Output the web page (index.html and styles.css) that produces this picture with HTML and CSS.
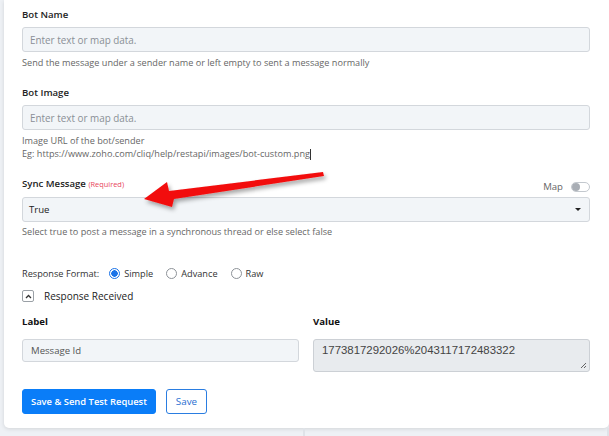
FILE: index.html
```html
<!DOCTYPE html>
<html lang="en">
<head>
    <meta charset="UTF-8">
    <meta name="viewport" content="width=device-width, initial-scale=1.0">
    <title>Post message as bot</title>
    <link rel="stylesheet" href="styles.css">
</head>
<body>
    <div class="card">
        <div class="field">
            <label class="field-label">Bot Name</label>
            <input class="text-input" type="text" placeholder="Enter text or map data.">
            <p class="hint">Send the message under a sender name or left empty to sent a message normally</p>
        </div>

        <div class="field">
            <label class="field-label">Bot Image</label>
            <input class="text-input" type="text" placeholder="Enter text or map data.">
            <p class="hint">Image URL of the bot/sender<br>Eg: https://www.zoho.com/cliq/help/restapi/images/bot-custom.png<span class="cursor"></span></p>
        </div>

        <div class="field">
            <div class="label-row">
                <label class="field-label">Sync Message <span class="required">(Required)</span></label>
                <div class="map-toggle">
                    <span>Map</span>
                    <span class="switch"><span class="knob"></span></span>
                </div>
            </div>
            <div class="select-box">
                <span>True</span>
                <span class="caret"></span>
            </div>
            <p class="hint">Select true to post a message in a synchronous thread or else select false</p>
        </div>

        <div class="format-row">
            <span class="format-label">Response Format:</span>
            <label class="radio"><span class="radio-dot checked"></span>Simple</label>
            <label class="radio"><span class="radio-dot"></span>Advance</label>
            <label class="radio"><span class="radio-dot"></span>Raw</label>
        </div>

        <div class="collapse-row">
            <span class="collapse-btn">
                <svg width="7" height="5" viewBox="0 0 7 5"><path d="M1 4 L3.5 1.5 L6 4" fill="none" stroke="#333" stroke-width="1.3"/></svg>
            </span>
            <span>Response Received</span>
        </div>

        <div class="response-grid">
            <div class="col">
                <div class="col-title">Label</div>
                <div class="label-box">Message Id</div>
            </div>
            <div class="col">
                <div class="col-title">Value</div>
                <div class="value-box">1773817292026%2043117172483322
                    <svg class="grip" width="7" height="7" viewBox="0 0 7 7"><path d="M6 1 L1 6 M6 4 L4 6" stroke="#555" stroke-width="0.9"/></svg>
                </div>
            </div>
        </div>

        <div class="actions">
            <button class="btn btn-primary">Save &amp; Send Test Request</button>
            <button class="btn btn-outline">Save</button>
        </div>
    </div>

    <div class="below">
        <div class="below-col"></div>
        <div class="below-col"></div>
    </div>

    <svg class="annotation" width="609" height="436" viewBox="0 0 609 436">
        <defs>
            <filter id="shadow" x="-10%" y="-50%" width="120%" height="200%">
                <feDropShadow dx="2" dy="3" stdDeviation="2" flood-color="#000" flood-opacity="0.35"/>
            </filter>
        </defs>
        <polygon points="144,199 167,182 169,191 323,172 324,176 174,199 172,207" fill="#f20d0d" filter="url(#shadow)"/>
    </svg>
</body>
</html>
```

FILE: styles.css
```css
* {
    box-sizing: border-box;
    margin: 0;
    padding: 0;
}
body {
    font-family: 'Open Sans', 'Noto Sans', sans-serif;
    background-color: #eef1f5;
    color: #333;
    width: 609px;
    height: 436px;
    overflow: hidden;
    position: relative;
}
.card {
    margin-left: 4px;
    background: #fff;
    border-radius: 0 0 5px 5px;
    box-shadow: 0 1px 4px rgba(0,0,0,0.12);
    padding: 8px 19px 13px 18px;
    height: 428px;
}
.field {
    margin-bottom: 17px;
}
.field-label {
    display: block;
    font-size: 9.6px;
    font-weight: 600;
    color: #222;
    line-height: 14px;
    margin-bottom: 5px;
}
.required {
    color: #e8455b;
    font-size: 7.4px;
    font-weight: 400;
}
.text-input {
    display: block;
    width: 100%;
    height: 25px;
    border: 1px solid #d3d7dc;
    border-radius: 3px;
    background: #f2f5f8;
    padding: 0 7px;
    font-family: inherit;
    font-size: 9.9px;
    color: #333;
    outline: none;
}
.text-input::placeholder {
    color: #8a8f96;
}
.hint {
    margin-top: 4px;
    font-size: 9.15px;
    line-height: 13px;
    color: #666;
}
.cursor {
    display: inline-block;
    width: 1px;
    height: 11px;
    background: #333;
    vertical-align: middle;
}
.label-row {
    display: flex;
    justify-content: space-between;
    align-items: flex-end;
    margin-bottom: 6px;
}
.label-row .field-label {
    margin-bottom: 0;
}
.map-toggle {
    display: flex;
    align-items: center;
    gap: 8px;
    font-size: 9.6px;
    color: #666;
    margin-bottom: -2px;
}
.switch {
    width: 19px;
    height: 10px;
    border: 1px solid #c3c8ce;
    border-radius: 6px;
    position: relative;
    background: #fff;
}
.knob {
    position: absolute;
    left: 0;
    top: 0;
    width: 8px;
    height: 8px;
    border-radius: 50%;
    background: #a9aeb5;
}
.select-box {
    display: flex;
    justify-content: space-between;
    align-items: center;
    height: 25px;
    border: 1px solid #d3d7dc;
    border-radius: 3px;
    background: #f2f5f8;
    padding: 0 8px 0 6px;
    font-size: 9.6px;
    color: #222;
}
.caret {
    width: 0;
    height: 0;
    border-left: 3px solid transparent;
    border-right: 3px solid transparent;
    border-top: 3px solid #222;
}
.field:nth-child(3) .hint {
    margin-top: 3px;
}
.format-row {
    display: flex;
    align-items: center;
    margin-top: 28px;
    font-size: 9.2px;
    color: #333;
    height: 14px;
}
.format-label {
    margin-right: 10px;
}
.radio {
    display: flex;
    align-items: center;
    gap: 4px;
    margin-right: 13px;
}
.radio-dot {
    width: 11px;
    height: 11px;
    border-radius: 50%;
    border: 1px solid #8d9298;
    background: #fff;
}
.radio-dot.checked {
    border-color: #1a73e8;
    background: radial-gradient(circle, #1a73e8 0 3px, #fff 3.5px);
}
.collapse-row {
    display: flex;
    align-items: center;
    gap: 10px;
    margin-top: 9px;
    font-size: 10px;
    font-weight: 500;
    color: #222;
    height: 14px;
}
.collapse-btn {
    width: 12px;
    height: 12px;
    border: 1px solid #9aa0a6;
    border-radius: 2px;
    display: flex;
    align-items: center;
    justify-content: center;
}
.response-grid {
    display: grid;
    grid-template-columns: 277px 277px;
    gap: 14px;
    margin-top: 12px;
}
.col-title {
    font-size: 9.6px;
    font-weight: 700;
    color: #111;
    line-height: 14px;
    margin-bottom: 10px;
}
.label-box {
    height: 23px;
    border: 1px solid #d3d7dc;
    border-radius: 3px;
    background: #f2f5f8;
    padding: 0 8px;
    display: flex;
    align-items: center;
    font-size: 9.6px;
    color: #555;
}
.value-box {
    position: relative;
    height: 33px;
    border: 1px solid #ccd0d5;
    border-radius: 3px;
    background: #e8ebee;
    padding: 4px 8px;
    font-family: 'Liberation Sans', Arial, sans-serif;
    font-size: 11.4px;
    color: #444;
}
.grip {
    position: absolute;
    right: 2px;
    bottom: 2px;
}
.actions {
    display: flex;
    gap: 10px;
    margin-top: 17px;
}
.btn {
    height: 25px;
    border-radius: 3px;
    font-family: inherit;
    cursor: pointer;
}
.btn-primary {
    background: #0a7df8;
    border: 1px solid #0a7df8;
    color: #fff;
    font-size: 9.4px;
    font-weight: 600;
    padding: 0 8px;
}
.btn-outline {
    background: #fff;
    border: 1px solid #2a7de1;
    color: #2a6fd1;
    font-size: 9.8px;
    padding: 0 9px;
}
.below {
    display: flex;
    height: 8px;
}
.below-col {
    width: 306px;
    border-right: 2px solid #dfe3e8;
}
.annotation {
    position: absolute;
    left: 0;
    top: 0;
    pointer-events: none;
}
```
